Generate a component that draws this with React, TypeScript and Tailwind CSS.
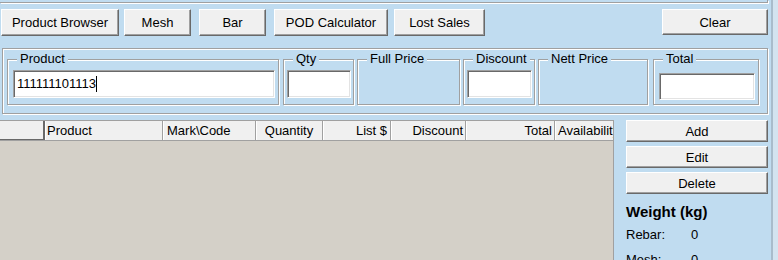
import React from 'react';

const font = { fontFamily: '"Liberation Sans", Arial, sans-serif' };

function WinButton({ label, className = '' }: { label: string; className?: string }) {
  return (
    <div
      className={`flex items-center justify-center bg-[#f0f0f0] border border-t-white border-l-white border-r-[#696969] border-b-[#696969] shadow-[inset_-1px_-1px_0_#a0a0a0] text-[13px] leading-none text-black ${className}`}
    >
      {label}
    </div>
  );
}

function GroupBox({
  label,
  className = '',
  children,
}: {
  label: string;
  className?: string;
  children?: React.ReactNode;
}) {
  return (
    <div
      className={`relative h-[46px] border border-[#a0a0a0] shadow-[inset_1px_1px_0_#fff,1px_1px_0_#fff] ${className}`}
    >
      {/* label sits over the top edge */}
      <span className="absolute left-[9px] top-[-9px] bg-[#c0dcf0] px-[3px] text-[13px] leading-[16px] text-black">
        {label}
      </span>
      {children}
    </div>
  );
}

function SunkenInput({ className = '', children }: { className?: string; children?: React.ReactNode }) {
  return (
    <div
      className={`flex items-center bg-white border border-t-[#a0a0a0] border-l-[#a0a0a0] border-b-white border-r-white shadow-[inset_1px_1px_0_#696969,inset_-1px_-1px_0_#e3e3e3] text-[13px] text-black ${className}`}
    >
      {children}
    </div>
  );
}

const columns = [
  { label: 'Product', w: 'w-[118px]', align: 'justify-start pl-[2px]' },
  { label: 'Mark\\Code', w: 'w-[93px]', align: 'justify-start pl-[4px]' },
  { label: 'Quantity', w: 'w-[67px]', align: 'justify-center' },
  { label: 'List $', w: 'w-[68px]', align: 'justify-end pr-[3px]' },
  { label: 'Discount', w: 'w-[75px]', align: 'justify-end pr-[2px]' },
  { label: 'Total', w: 'w-[89px]', align: 'justify-end pr-[2px]' },
  { label: 'Availability', w: 'w-[70px]', align: 'justify-start pl-[3px]' },
];

export default function App() {
  return (
    <div style={font} className="flex w-[778px] h-[260px] overflow-hidden bg-[#c0dcf0] text-black">
      <div className="w-[771px] shrink-0">
        {/* bottom edge of the panel above */}
        <div className="h-[3px] w-[768px] border-b border-r border-[#a0a0a0] shadow-[1px_1px_0_#fff]" />

        {/* toolbar */}
        <div className="flex items-start pt-[6px] pl-[1px]">
          <WinButton label="Product Browser" className="w-[118px] h-[27px]" />
          <WinButton label="Mesh" className="ml-[5px] w-[67px] h-[27px]" />
          <WinButton label="Bar" className="ml-[8px] w-[67px] h-[27px]" />
          <WinButton label="POD Calculator" className="ml-[8px] w-[114px] h-[27px]" />
          <WinButton label="Lost Sales" className="ml-[6px] w-[91px] h-[27px]" />
          <WinButton label="Clear" className="ml-[177px] w-[106px] h-[26px]" />
        </div>

        {/* entry frame */}
        <div className="ml-[2px] mt-[12px] w-[766px] h-[66px] border border-[#a0a0a0] shadow-[inset_1px_1px_0_#fff,1px_1px_0_#fff] pl-[4px] pt-[10px] flex items-start">
          <GroupBox label="Product" className="w-[272px] pl-[5px] pt-[10px]">
            <SunkenInput className="w-[262px] h-[28px] pl-[3px]">
              <span>111111101113</span>
              <span className="w-px h-[16px] bg-black" />
            </SunkenInput>
          </GroupBox>
          <GroupBox label="Qty" className="ml-[4px] w-[71px] pl-[3px] pt-[10px]">
            <SunkenInput className="w-[64px] h-[28px]" />
          </GroupBox>
          <GroupBox label="Full Price" className="ml-[3px] w-[103px]" />
          <GroupBox label="Discount" className="ml-[3px] w-[72px] pl-[3px] pt-[10px]">
            <SunkenInput className="w-[65px] h-[28px]" />
          </GroupBox>
          <GroupBox label="Nett Price" className="ml-[3px] w-[110px]" />
          <GroupBox label="Total" className="ml-[5px] w-[106px] pl-[5px] pt-[13px]">
            <SunkenInput className="w-[96px] h-[27px]" />
          </GroupBox>
        </div>

        {/* grid + side actions */}
        <div className="flex items-start mt-[6px]">
          <div className="w-[614px] h-[140px] border-t border-r border-[#a0a0a0] bg-[#d4d0c8] flex flex-col">
            <div className="flex h-[20px] bg-[#f0f0f0] border-b border-[#a0a0a0] overflow-hidden">
              <div className="w-[45px] shrink-0 border-r-2 border-b border-[#696969]" />
              {columns.map((c) => (
                <div
                  key={c.label}
                  className={`${c.w} shrink-0 flex items-center ${c.align} border-r border-[#a0a0a0] shadow-[inset_1px_0_0_#fff] text-[13px] leading-none whitespace-nowrap overflow-hidden`}
                >
                  {c.label}
                </div>
              ))}
            </div>
          </div>

          <div className="ml-[12px] w-[142px] flex flex-col">
            <WinButton label="Add" className="h-[22px]" />
            <WinButton label="Edit" className="mt-[4px] h-[22px]" />
            <WinButton label="Delete" className="mt-[4px] h-[22px]" />
            <div className="mt-[9px] text-[15px] font-bold leading-[18px]">Weight (kg)</div>
            <div className="mt-[6px] flex text-[13px] leading-[16px]">
              <span className="w-[65px]">Rebar:</span>
              <span>0</span>
            </div>
            <div className="mt-[9px] flex text-[13px] leading-[16px]">
              <span className="w-[65px]">Mesh:</span>
              <span>0</span>
            </div>
          </div>
        </div>
      </div>

      {/* splitter edge */}
      <div className="w-[2px] shrink-0 bg-[#a9bccb]" />
      <div className="flex-1 bg-[#d3e3ef]" />
    </div>
  );
}
